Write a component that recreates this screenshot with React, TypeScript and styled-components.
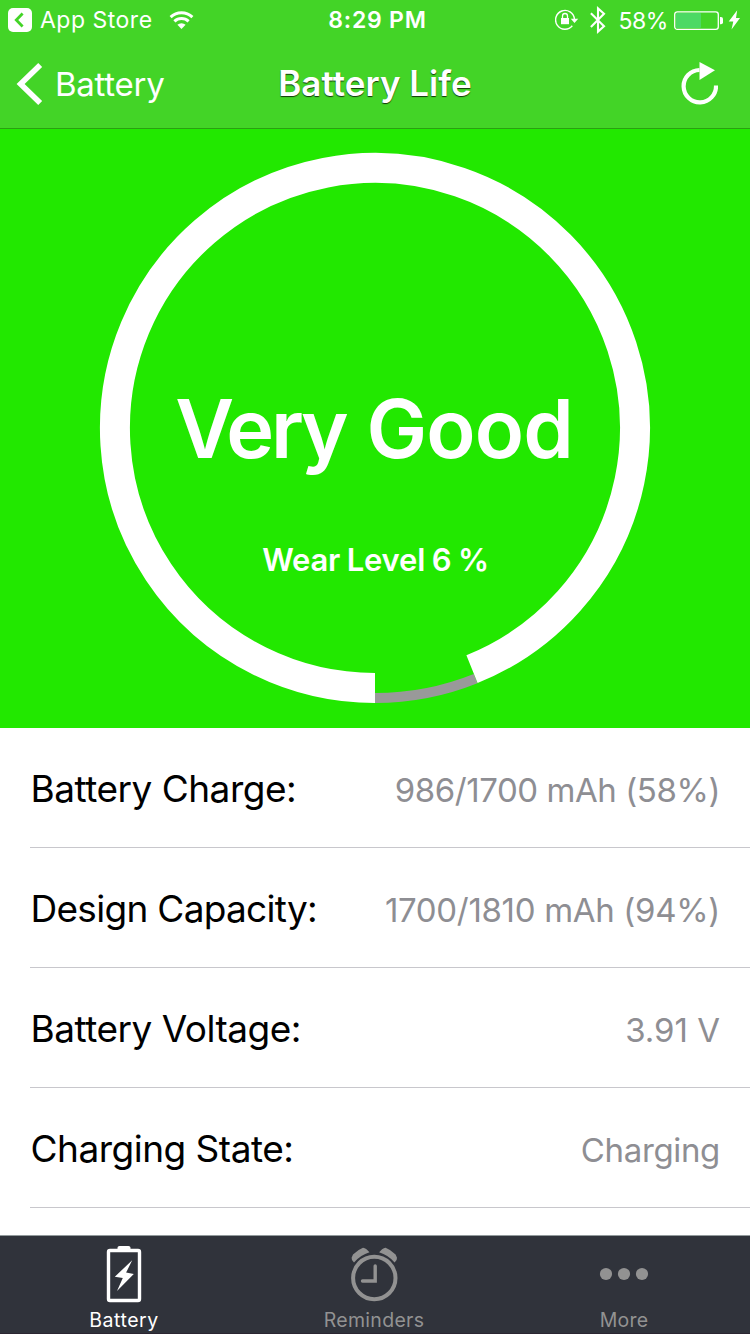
import React from 'react';
import styled, { createGlobalStyle } from 'styled-components';

const GlobalStyle = createGlobalStyle`
  *, *::before, *::after { box-sizing: border-box; }
  html, body { margin: 0; padding: 0; background: #fff; }
  body { font-family: Inter, "Liberation Sans", sans-serif; }
  svg { display: block; flex: none; }
`;

const Screen = styled.div`
  display: flex;
  flex-direction: column;
  width: 750px;
  height: 1334px;
  overflow: hidden;
  background: #fff;
`;

const Header = styled.header`
  flex: none;
  height: 129px;
  background: #43d427;
  border-bottom: 1px solid #2aa012;
  color: #fff;
`;

const StatusBar = styled.div`
  display: grid;
  grid-template-columns: 1fr auto 1fr;
  align-items: center;
  height: 40px;
  padding: 0 10px 0 8px;
`;

const StatusGroup = styled.div<{ $end?: boolean }>`
  display: flex;
  align-items: center;
  justify-content: ${(p) => (p.$end ? 'flex-end' : 'flex-start')};
  height: 40px;
`;

const Label = styled.span<{ $size: number; $weight?: number; $spacing?: number }>`
  font-size: ${(p) => p.$size}px;
  font-weight: ${(p) => p.$weight ?? 400};
  letter-spacing: ${(p) => p.$spacing ?? 0}px;
  line-height: 1.2;
  white-space: nowrap;
`;

const AppStoreLabel = styled(Label)`
  margin: 2px 16px 0 8px;
`;

const Clock = styled(Label)`
  margin: 2px 0 0 7px;
`;

const PercentLabel = styled(Label)`
  margin: 3px 6px 0 12.5px;
`;

const NavBar = styled.div`
  display: grid;
  grid-template-columns: 1fr auto 1fr;
  align-items: center;
  height: 88px;
  padding: 0 16px;
`;

const BackButton = styled.div`
  display: flex;
  align-items: center;
  gap: 12px;
`;

const BackLabel = styled(Label)`
  padding-top: 2px;
`;

const Title = styled(Label)`
  padding-bottom: 2px;
  text-shadow: 0 1px 1px rgba(0, 0, 0, 0.75);
`;

const Action = styled.div`
  display: flex;
  justify-content: flex-end;
  padding: 0 16px 2px 0;
`;

const Hero = styled.section`
  display: grid;
  flex: none;
  height: 599px;
  background: #22e800;
  color: #fff;
  > * { grid-area: 1 / 1; }
`;

const HeroText = styled.div`
  display: flex;
  flex-direction: column;
  align-items: center;
  padding: 252px 2px 0 0;
`;

const Rating = styled.div`
  display: flex;
  gap: 21px;
`;

const WearLevel = styled(Label)`
  margin: 63px 0 0 3px;
  word-spacing: -1px;
`;

const List = styled.main`
  flex: 1;
  min-height: 0;
  overflow: hidden;
`;

const Row = styled.div`
  display: flex;
  align-items: center;
  justify-content: space-between;
  height: 120px;
  margin-left: 30px;
  padding: 4px 30px 0 0;
  border-bottom: 1px solid #c8c7cc;
`;

const Name = styled(Label)`
  padding-left: 0.5px;
  color: #000;
`;

const Value = styled(Label)`
  margin-top: 2px;
  color: #8e8e93;
`;

const TabBar = styled.nav`
  display: grid;
  flex: none;
  grid-template-columns: repeat(3, 250px);
  height: 99px;
  border-top: 1px solid #929a9c;
  border-bottom: 1px solid #2b2531;
  background: #30333b;
`;

const Tab = styled.div<{ $active?: boolean }>`
  display: flex;
  flex-direction: column;
  align-items: center;
  padding: 9px 2px 0 0;
  color: ${(p) => (p.$active ? '#fff' : '#929292')};
`;

const TabLabel = styled(Label)`
  margin-top: 6px;
`;

const BackToApp = () => (
  <svg width="24" height="24" viewBox="0 0 24 24">
    <rect width="24" height="24" rx="5" fill="#fff" />
    <path d="M14.6 5.6 8.3 12l6.3 6.4" fill="none" stroke="#43d427" strokeWidth="2.8" />
  </svg>
);

const Wifi = () => (
  <svg width="26" height="20" viewBox="0 0 26 20" fill="none" stroke="#fff" strokeWidth="3">
    <path d="M1.6 7.1a16 16 0 0 1 21.8 0" />
    <path d="M5.4 11.4a10.3 10.3 0 0 1 14.2 0" />
    <path d="M12.5 19 8.4 14.8a6 6 0 0 1 8.2 0z" fill="#fff" stroke="none" />
  </svg>
);

const RotationLock = () => (
  <svg width="24" height="22" viewBox="0 0 24 22">
    <path d="M17.3 16.8A9.4 9.4 0 1 1 19.4 10" fill="none" stroke="#fff" strokeWidth="1.4" />
    <path d="M15.8 9.8h7.4l-3.7 4.2z" fill="#fff" />
    <rect x="6" y="9" width="8" height="6.2" fill="#fff" />
    <path d="M7.5 9V7a2.5 2.5 0 0 1 5 0v2" fill="none" stroke="#fff" strokeWidth="1.3" />
  </svg>
);

const BluetoothSvg = styled.svg`
  margin-left: 11px;
`;

const Bluetooth = () => (
  <BluetoothSvg width="16" height="28" viewBox="0 0 16 28" fill="none" stroke="#fff" strokeWidth="2.1">
    <path d="M.9 7.3 14 20.3 8 25.6V2.4l6 5.4L.9 20.9" />
  </BluetoothSvg>
);

const BatteryStatus = () => (
  <svg width="66" height="24" viewBox="0 0 66 24">
    <rect x=".7" y="3.8" width="43.6" height="17.6" rx="2.6" fill="none" stroke="#fff" strokeWidth="1.3" />
    <rect x="2" y="5.1" width="25" height="15" rx="1" fill="#4cd964" />
    <path d="M46 9h1a2 2 0 0 1 2 2v3.2a2 2 0 0 1-2 2h-1z" fill="#fff" />
    <path d="M63.2 2.3 54.7 13.4h4.6L57.5 21.6 66 9.9h-4z" fill="#fff" />
  </svg>
);

const BackChevron = () => (
  <svg width="27" height="44" viewBox="0 0 27 44">
    <path d="M24.2 3 4.6 22l19.6 19" fill="none" stroke="#fff" strokeWidth="5.6" />
  </svg>
);

const Reload = () => (
  <svg width="38" height="46" viewBox="0 0 38 46">
    <path d="M36 25.5A16.2 16.2 0 1 1 19.5 10" fill="none" stroke="#fff" strokeWidth="4.2" />
    <path d="M19.5 2v18L35 10.3z" fill="#fff" />
  </svg>
);

const WearRing = () => (
  <svg width="750" height="599" viewBox="0 0 750 599" fill="none">
    <path d="M375 569A270 270 0 0 0 475.6 549.6" stroke="#999" strokeWidth="10" />
    <path d="M375 559A260 260 0 1 1 472 540.2" stroke="#fff" strokeWidth="30" />
  </svg>
);

const BatteryTab = () => (
  <svg width="36" height="58" viewBox="0 0 36 58">
    <path d="M11.5 5V2.8Q11.5 1 13.5 1h9q2 0 2 1.8V5z" fill="currentColor" />
    <rect x="2.5" y="5.5" width="31" height="50" rx="1.5" fill="none" stroke="currentColor" strokeWidth="3.4" />
    <path d="M26.2 15.3 8.8 31.7l8 1.3-5.8 13L27.8 29l-7.7-1.4z" fill="currentColor" />
  </svg>
);

const RemindersTab = () => (
  <svg width="50" height="58" viewBox="0 0 50 58">
    <circle cx="25.3" cy="33" r="21.2" fill="none" stroke="currentColor" strokeWidth="4" />
    <path d="M26.2 21v15H13.500" fill="none" stroke="currentColor" strokeWidth="3.400" strokeLinecap="round" />
    <path d="M5 17.500Q2.300 15.500 2.600 12.800L4 9.500Q8.500 4.800 14 2.700 15.500 2.600 17.500 4.300L20.500 7.300Q11.500 10 5 17.500z" fill="currentColor" />
    <path d="M45.600 17.500Q48.300 15.500 48 12.800L46.600 9.500Q42.100 4.800 36.600 2.700 35.100 2.600 33.100 4.300L30.100 7.300Q39.100 10 45.600 17.500z" fill="currentColor" />
  </svg>
);

const MoreTab = () => (
  <svg width="50" height="58" viewBox="0 0 50 58" fill="currentColor">
    <circle cx="7" cy="29" r="6.1" />
    <circle cx="25" cy="29" r="6.1" />
    <circle cx="43" cy="29" r="6.1" />
  </svg>
);

const rows = [
  { name: 'Battery Charge:', value: '986/1700 mAh (58%)', nameSpacing: -0.5, valueSpacing: -0.44 },
  { name: 'Design Capacity:', value: '1700/1810 mAh (94%)', nameSpacing: -0.7, valueSpacing: -0.32 },
  { name: 'Battery Voltage:', value: '3.91 V', nameSpacing: -0.5, valueSpacing: 0 },
  { name: 'Charging State:', value: 'Charging', nameSpacing: -0.5, valueSpacing: -0.35 },
];

const tabs = [
  { name: 'Battery', icon: <BatteryTab />, active: true, spacing: 0.5 },
  { name: 'Reminders', icon: <RemindersTab />, active: false, spacing: 0.3 },
  { name: 'More', icon: <MoreTab />, active: false, spacing: 0.2 },
];

export default function App() {
  return (
    <Screen>
      <GlobalStyle />
      <Header>
        <StatusBar>
          <StatusGroup>
            <BackToApp />
            <AppStoreLabel $size={23} $spacing={0.5}>App Store</AppStoreLabel>
            <Wifi />
          </StatusGroup>
          <Clock $size={23} $weight={600} $spacing={0.8}>8:29 PM</Clock>
          <StatusGroup $end>
            <RotationLock />
            <Bluetooth />
            <PercentLabel $size={23} $spacing={-0.4}>58%</PercentLabel>
            <BatteryStatus />
          </StatusGroup>
        </StatusBar>
        <NavBar>
          <BackButton>
            <BackChevron />
            <BackLabel $size={33} $spacing={-0.25}>Battery</BackLabel>
          </BackButton>
          <Title $size={35} $weight={600}>Battery Life</Title>
          <Action>
            <Reload />
          </Action>
        </NavBar>
      </Header>
      <Hero>
        <WearRing />
        <HeroText>
          <Rating>
            <Label $size={81} $weight={600} $spacing={-3.2}>Very</Label>
            <Label $size={81} $weight={600} $spacing={-0.9}>Good</Label>
          </Rating>
          <WearLevel $size={31} $weight={600} $spacing={-0.2}>Wear Level 6 %</WearLevel>
        </HeroText>
      </Hero>
      <List>
        {rows.map((row) => (
          <Row key={row.name}>
            <Name $size={37} $spacing={row.nameSpacing}>{row.name}</Name>
            <Value $size={33} $spacing={row.valueSpacing}>{row.value}</Value>
          </Row>
        ))}
      </List>
      <TabBar>
        {tabs.map((tab) => (
          <Tab key={tab.name} $active={tab.active}>
            {tab.icon}
            <TabLabel $size={19.5} $spacing={tab.spacing}>{tab.name}</TabLabel>
          </Tab>
        ))}
      </TabBar>
    </Screen>
  );
}
